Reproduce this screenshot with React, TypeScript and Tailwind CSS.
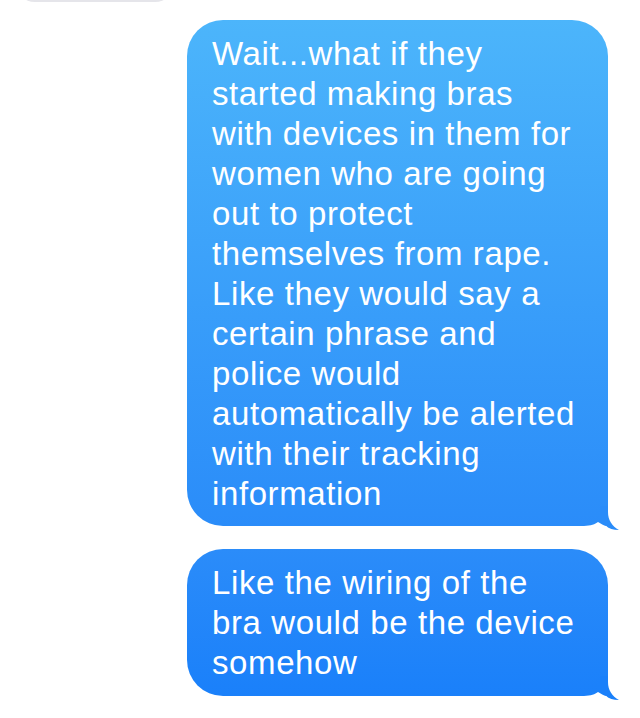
const Tail = ({ color }: { color: string }) => (
	<svg
		className="absolute right-[-12px] bottom-[-4px] w-[40px] h-[40px]"
		viewBox="0 0 40 40"
		aria-hidden
	>
		<path
			d="M28 16 V22 C28 30 32 36 39 40 C33 40 29 38.5 26 36 H20 V16 Z"
			fill={color}
		/>
		<path d="M4 36 C11 35.6 15 34.2 18 32 C21 34 23.5 35.2 26.5 36.2 L26.5 37 H4 Z" fill="#ffffff" />
	</svg>
);

const Bubble = ({
	lines,
	from,
	to,
	className,
}: {
	lines: string[];
	from: string;
	to: string;
	className: string;
}) => (
	<div
		className={`relative ml-[187px] w-[421px] rounded-[36px] rounded-br-none px-[25px] text-white text-[33px] leading-[40px] tracking-[0.6px] ${className}`}
		style={{ background: `linear-gradient(${from}, ${to})` }}
	>
		{lines.map((l) => (
			<div key={l} className="whitespace-nowrap">
				{l}
			</div>
		))}
		<Tail color={to} />
	</div>
);

export default function App() {
	return (
		<div className="w-[640px] h-[718px] bg-white overflow-hidden font-['Liberation_Sans',Arial,sans-serif]">
			<div className="ml-[15px] mt-[-38px] h-[40px] w-[160px] rounded-[20px] bg-[#e5e5ea]" />
			<Bubble
				className="mt-[18px] pt-[14px] pb-[12px]"
				from="#4cb5fb"
				to="#2a8cf9"
				lines={[
					'Wait...what if they',
					'started making bras',
					'with devices in them for',
					'women who are going',
					'out to protect',
					'themselves from rape.',
					'Like they would say a',
					'certain phrase and',
					'police would',
					'automatically be alerted',
					'with their tracking',
					'information',
				]}
			/>
			<Bubble
				className="mt-[23px] pt-[14px] pb-[13px]"
				from="#2b8cf9"
				to="#1a80fa"
				lines={['Like the wiring of the', 'bra would be the device', 'somehow']}
			/>
		</div>
	);
}
